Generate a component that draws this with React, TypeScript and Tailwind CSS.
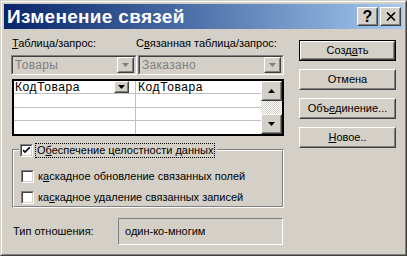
import React from "react";

const face = "bg-[#d4d0c8]";

const Raised = ({ className = "", children }: { className?: string; children?: React.ReactNode }) => (
  <div className={`border border-t-white border-l-white border-r-[#404040] border-b-[#404040] ${className}`}>
    <div className={`w-full h-full border border-t-[#d4d0c8] border-l-[#d4d0c8] border-r-[#808080] border-b-[#808080] ${face} flex items-center justify-center`}>
      {children}
    </div>
  </div>
);

const Sunken = ({ className = "", inner = "", children }: { className?: string; inner?: string; children?: React.ReactNode }) => (
  <div className={`border border-t-[#808080] border-l-[#808080] border-r-white border-b-white ${className}`}>
    <div className={`w-full h-full border border-t-[#404040] border-l-[#404040] border-r-[#d4d0c8] border-b-[#d4d0c8] ${inner}`}>
      {children}
    </div>
  </div>
);

const Arrow = ({ down = true, color = "#000" }: { down?: boolean; color?: string }) => (
  <svg width="7" height="4" viewBox="0 0 7 4">
    {down ? <polygon points="0,0 7,0 3.5,4" fill={color} /> : <polygon points="0,4 7,4 3.5,0" fill={color} />}
  </svg>
);

const Check = ({ checked }: { checked?: boolean }) => (
  <Sunken className="w-[13px] h-[13px]" inner="bg-white flex items-center justify-center">
    {checked && (
      <svg width="7" height="7" viewBox="0 0 7 7">
        <polyline points="0,3 2,5 7,0" fill="none" stroke="#000" strokeWidth="1.6" />
      </svg>
    )}
  </Sunken>
);

const Btn = ({ children, def }: { children: React.ReactNode; def?: boolean }) => (
  <div className={`h-[21px] w-[97px] ${def ? "border border-black" : ""}`}>
    <Raised className="w-full h-full">
      <span className="text-[11px] text-black leading-none">{children}</span>
    </Raised>
  </div>
);

export default function App() {
  return (
    <div
      className="w-[407px] h-[256px] border border-t-[#d4d0c8] border-l-[#d4d0c8] border-r-[#404040] border-b-[#404040] overflow-hidden"
      style={{ fontFamily: '"Liberation Sans", Arial, sans-serif' }}
    >
      <div className={`w-full h-full border border-t-white border-l-white border-r-[#808080] border-b-[#808080] ${face} p-[2px] flex flex-col`}>
        {/* title bar */}
        <div className="h-[25px] bg-linear-to-r from-[#0a246a] to-[#a6caf0] flex items-center justify-between pl-[3px] pr-[2px]">
          <span className="text-white font-bold text-[19px] leading-none tracking-[0.3px]">Изменение связей</span>
          <div className="flex gap-[2px]">
            <Raised className="w-[21px] h-[19px]">
              <span className="font-bold text-[16px] leading-none text-black">?</span>
            </Raised>
            <Raised className="w-[21px] h-[19px]">
              <svg width="10" height="9" viewBox="0 0 10 9">
                <path d="M1 0.5 L9 8.5 M9 0.5 L1 8.5" stroke="#000" strokeWidth="1.6" />
              </svg>
            </Raised>
          </div>
        </div>

        {/* body */}
        <div className="flex pl-[7px] pt-[8px] text-[11px] text-black">
          <div className="w-[273px] flex flex-col">
            <div className="flex h-[13px] leading-[13px]">
              <span className="w-[124px] pl-[1px]"><u>Т</u>аблица/запрос:</span>
              <span className="pl-[1px]">С<u>в</u>язанная таблица/запрос:</span>
            </div>

            <div className="flex mt-[5px] h-[20px] text-[12px] tracking-[0.3px]">
              <Sunken className="w-[126px] h-full" inner="flex items-center justify-between pl-[2px] pr-[1px]">
                <span className="text-[#808080]">Товары</span>
                <Raised className="w-[17px] h-[16px]"><Arrow color="#808080" /></Raised>
              </Sunken>
              <Sunken className="ml-[1px] w-[146px] h-full" inner="flex items-center justify-between pl-[2px] pr-[1px]">
                <span className="text-[#808080]">Заказано</span>
                <Raised className="w-[17px] h-[16px]"><Arrow color="#808080" /></Raised>
              </Sunken>
            </div>

            {/* grid */}
            <div className="mt-[4px] h-[57px] border-2 border-black bg-white flex ml-[1px] w-[272px] text-[12px] tracking-[0.6px]">
              <div className="flex-1 flex flex-col">
                {[0, 1, 2, 3].map((r) => (
                  <div key={r} className={`flex h-[14px] ${r < 3 ? "border-b border-[#c0c0c0]" : ""}`}>
                    <div className="w-[122px] border-r border-[#c0c0c0] flex items-center justify-between pl-[1px] pr-[6px]">
                      {r === 0 && (
                        <>
                          <span className="leading-none">КодТовара</span>
                          <Raised className="w-[15px] h-[12px]"><Arrow /></Raised>
                        </>
                      )}
                    </div>
                    <div className="flex-1 flex items-center pl-[2px]">
                      {r === 0 && <span className="leading-none">КодТовара</span>}
                    </div>
                  </div>
                ))}
              </div>
              <div className="w-[21px] flex flex-col">
                <Raised className="w-full h-[20px]"><Arrow down={false} /></Raised>
                <div className="flex-1 bg-[repeating-conic-gradient(#fff_0_25%,#d4d0c8_0_50%)] bg-[length:2px_2px]" />
                <Raised className="w-full h-[20px]"><Arrow /></Raised>
              </div>
            </div>

            {/* group box */}
            <div className="relative mt-[13px] ml-[1px] w-[272px] h-[59px] border border-t-[#808080] border-l-[#808080] border-r-white border-b-white">
              <div className="w-full h-full border border-t-white border-l-white border-r-[#808080] border-b-[#808080] flex flex-col pl-[7px] pt-[19px] gap-[8px]">
                <div className="flex items-center gap-[4px] h-[13px]">
                  <Check />
                  <span className="leading-none">к<u>а</u>скадное обновление связанных полей</span>
                </div>
                <div className="flex items-center gap-[4px] h-[13px]">
                  <Check />
                  <span className="leading-none">ка<u>с</u>кадное удаление связанных записей</span>
                </div>
              </div>
              <div className={`absolute left-[6px] top-[-7px] flex items-center gap-[2px] ${face} pl-[1px] pr-[2px]`}>
                <Check checked />
                <span className="border border-dotted border-black px-[1px] leading-[13px]">О<u>б</u>еспечение целостности данных</span>
              </div>
            </div>

            {/* relationship type */}
            <div className="flex items-center mt-[10px] ml-[1px]">
              <span className="w-[106px] pl-[1px]">Тип отношения:</span>
              <div className="w-[165px] h-[27px] border border-t-[#808080] border-l-[#808080] border-r-white border-b-white flex items-center pl-[6px]">
                один-ко-многим
              </div>
            </div>
          </div>

          {/* buttons */}
          <div className="ml-[15px] mt-[3px] flex flex-col gap-[8px]">
            <Btn def>Созд<u>а</u>ть</Btn>
            <Btn>Отмена</Btn>
            <Btn>Объ<u>е</u>динение...</Btn>
            <Btn><u>Н</u>овое..</Btn>
          </div>
        </div>
      </div>
    </div>
  );
}
